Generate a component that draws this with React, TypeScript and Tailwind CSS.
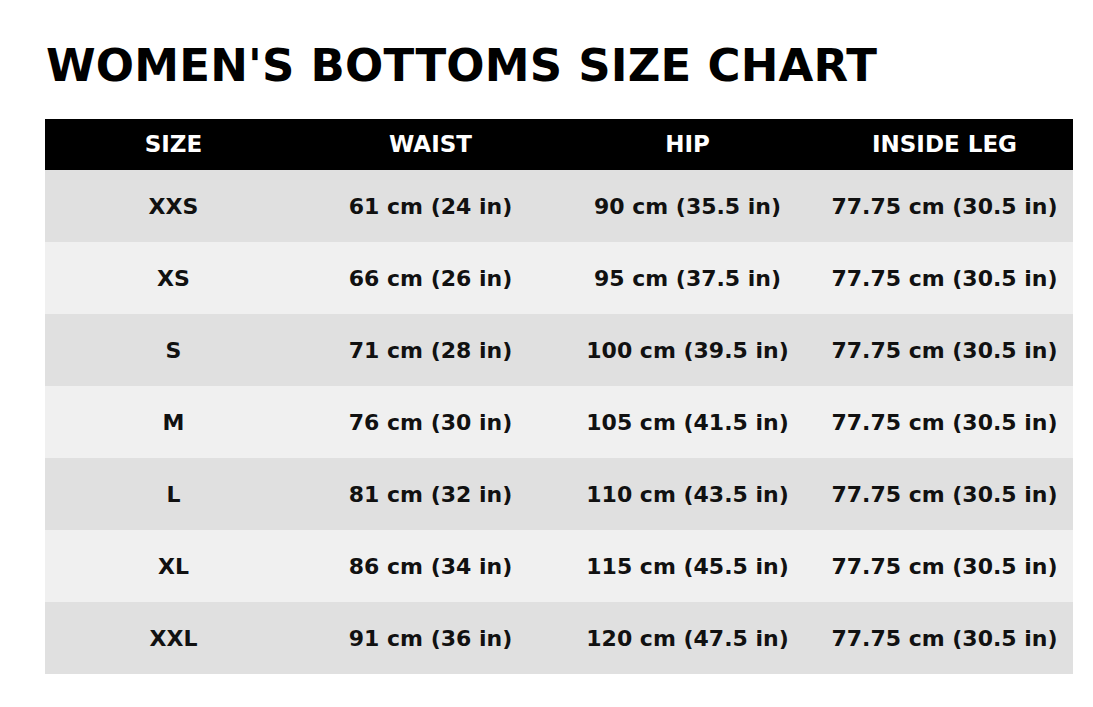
const rows = [
  ["XXS", "61 cm (24 in)", "90 cm (35.5 in)", "77.75 cm (30.5 in)"],
  ["XS", "66 cm (26 in)", "95 cm (37.5 in)", "77.75 cm (30.5 in)"],
  ["S", "71 cm (28 in)", "100 cm (39.5 in)", "77.75 cm (30.5 in)"],
  ["M", "76 cm (30 in)", "105 cm (41.5 in)", "77.75 cm (30.5 in)"],
  ["L", "81 cm (32 in)", "110 cm (43.5 in)", "77.75 cm (30.5 in)"],
  ["XL", "86 cm (34 in)", "115 cm (45.5 in)", "77.75 cm (30.5 in)"],
  ["XXL", "91 cm (36 in)", "120 cm (47.5 in)", "77.75 cm (30.5 in)"],
];

const headers = ["SIZE", "WAIST", "HIP", "INSIDE LEG"];

export default function App() {
  return (
    <div className="w-[1093px] h-[707px] bg-white font-['DejaVu_Sans',sans-serif] text-[#111]">
      <h1 className="pl-[46px] pt-[38px] text-[45px] leading-[56px] font-bold tracking-[0.2px] text-black">
        WOMEN'S BOTTOMS SIZE CHART
      </h1>
      <div className="mx-[45px] mt-[25px] w-[1028px]">
        <div className="grid grid-cols-4 h-[51px] bg-black text-white items-center">
          {headers.map((h) => (
            <div key={h} className="text-center text-[23px] font-bold">
              {h}
            </div>
          ))}
        </div>
        {rows.map((r, i) => (
          <div
            key={r[0]}
            className={`grid grid-cols-4 h-[72px] items-center ${i % 2 === 0 ? "bg-[#e0e0e0]" : "bg-[#f0f0f0]"}`}
          >
            {r.map((c, j) => (
              <div key={j} className="text-center text-[22px] font-bold">
                {c}
              </div>
            ))}
          </div>
        ))}
      </div>
    </div>
  );
}
